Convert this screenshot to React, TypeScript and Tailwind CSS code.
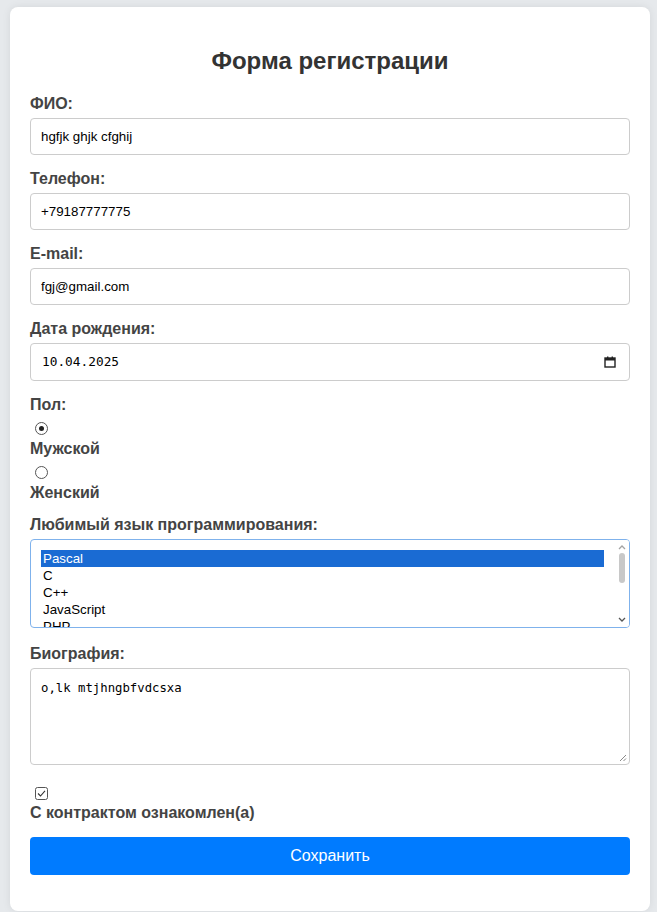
import React from 'react';

const labelCls = 'block text-[16px] leading-[18px] font-bold text-[#444] mb-[5px]';
const inputCls =
  'block w-full h-[37px] px-[10px] border border-[#ccc] rounded-[4px] bg-white text-[13.33px] text-black outline-none';

const Radio: React.FC<{ checked?: boolean }> = ({ checked }) => (
  <div className="h-[21px] pl-[5px] pt-[3px]">
    <div className="w-[13px] h-[13px] rounded-full border border-[#555] bg-white flex items-center justify-center">
      {checked && <div className="w-[5px] h-[5px] rounded-full bg-[#222]" />}
    </div>
  </div>
);

// only what fits in the visible part of the list box
const languages = ['Pascal', 'C', 'C++', 'JavaScript', 'PHP'];

const App: React.FC = () => {
  return (
    <div className="min-h-screen w-full bg-[#e6e9ec] pt-[7px] pb-[2px] font-['Liberation_Sans',Arial,sans-serif]">
      <div className="mx-[10px] w-[640px] bg-white rounded-[8px] shadow-[0_0_8px_rgba(0,0,0,0.08)] px-[20px] pt-[20px] pb-[36px]">
        <h2 className="mt-[20px] mb-[20px] text-center text-[24px] leading-[28px] font-bold text-[#333]">
          Форма регистрации
        </h2>

        {/* ФИО */}
        <div className="mb-[15px]">
          <label className={labelCls}>ФИО:</label>
          <input className={inputCls} defaultValue="hgfjk ghjk cfghij" readOnly />
        </div>

        <div className="mb-[15px]">
          <label className={labelCls}>Телефон:</label>
          <input className={inputCls} defaultValue="+79187777775" readOnly />
        </div>

        <div className="mb-[15px]">
          <label className={labelCls}>E-mail:</label>
          <input className={inputCls} defaultValue="fgj@gmail.com" readOnly />
        </div>

        <div className="mb-[15px]">
          <label className={labelCls}>Дата рождения:</label>
          <div className="flex items-center justify-between h-[38px] pl-[11px] pr-[13px] border border-[#ccc] rounded-[4px] bg-white">
            <span className="font-['DejaVu_Sans_Mono',monospace] text-[12.8px] text-black">10.04.2025</span>
            <svg width="12" height="12" viewBox="0 0 12 12">
              <rect x="1" y="2" width="10" height="9" fill="none" stroke="#222" strokeWidth="1.4" />
              <rect x="1" y="2" width="10" height="2.5" fill="#222" />
              <rect x="3" y="0.5" width="1.4" height="2" fill="#222" />
              <rect x="7.6" y="0.5" width="1.4" height="2" fill="#222" />
            </svg>
          </div>
        </div>

        {/* Пол */}
        <div className="mb-[14px]">
          <label className={labelCls}>Пол:</label>
          <Radio checked />
          <label className={labelCls}>Мужской</label>
          <Radio />
          <label className="block text-[16px] leading-[18px] font-bold text-[#444]">Женский</label>
        </div>

        {/* Язык */}
        <div className="mb-[17px]">
          <label className={labelCls}>Любимый язык программирования:</label>
          <div className="relative h-[89px] border border-[#7fb2ec] rounded-[4px] bg-white overflow-hidden pt-[10px] pl-[10px] pr-[25px]">
            {languages.map((lang, i) => (
              <div
                key={lang}
                className={`h-[17px] leading-[17px] pl-[2px] text-[13.33px] ${
                  i === 0 ? 'bg-[#1a6bd3] text-white' : 'text-black'
                }`}
              >
                {lang}
              </div>
            ))}
            {/* scrollbar */}
            <div className="absolute top-0 right-0 w-[15px] h-full bg-white flex flex-col items-center">
              <svg width="8" height="6" viewBox="0 0 8 6" className="mt-[4px]">
                <path d="M1 5 L4 2 L7 5" fill="none" stroke="#a3a3a3" strokeWidth="1.3" />
              </svg>
              <div className="mt-[3px] w-[6px] h-[30px] rounded-[3px] bg-[#c8c8c8]" />
              <div className="flex-1" />
              <svg width="8" height="6" viewBox="0 0 8 6" className="mb-[4px]">
                <path d="M1 1 L4 4 L7 1" fill="none" stroke="#555" strokeWidth="1.3" />
              </svg>
            </div>
          </div>
        </div>

        {/* Биография */}
        <div className="mb-[15px]">
          <label className={labelCls}>Биография:</label>
          <div className="relative h-[97px] border border-[#ccc] rounded-[4px] bg-white pt-[6px] pl-[10px]">
            <span className="font-['DejaVu_Sans_Mono',monospace] text-[12.3px] text-black">o,lk mtjhngbfvdcsxa</span>
            <svg width="8" height="8" viewBox="0 0 8 8" className="absolute right-[2px] bottom-[2px]">
              <path d="M7 1 L1 7 M7 4.5 L4.5 7" stroke="#888" strokeWidth="1" />
            </svg>
          </div>
        </div>

        {/* Контракт */}
        <div className="mb-[15px] pt-[7px]">
          <div className="pl-[5px] h-[17px]">
            <svg width="13" height="13" viewBox="0 0 13 13">
              <rect x="0.5" y="0.5" width="12" height="12" rx="2" fill="white" stroke="#555" />
              <path d="M3 6.5 L5.5 9 L10 3.8" fill="none" stroke="#333" strokeWidth="1.1" />
            </svg>
          </div>
          <label className="block text-[16px] leading-[18px] font-bold text-[#444]">
            С контрактом ознакомлен(а)
          </label>
        </div>

        <button className="block w-full h-[38px] rounded-[4px] bg-[#007bff] text-white text-[16px]">
          Сохранить
        </button>
      </div>
    </div>
  );
};

export default App;
